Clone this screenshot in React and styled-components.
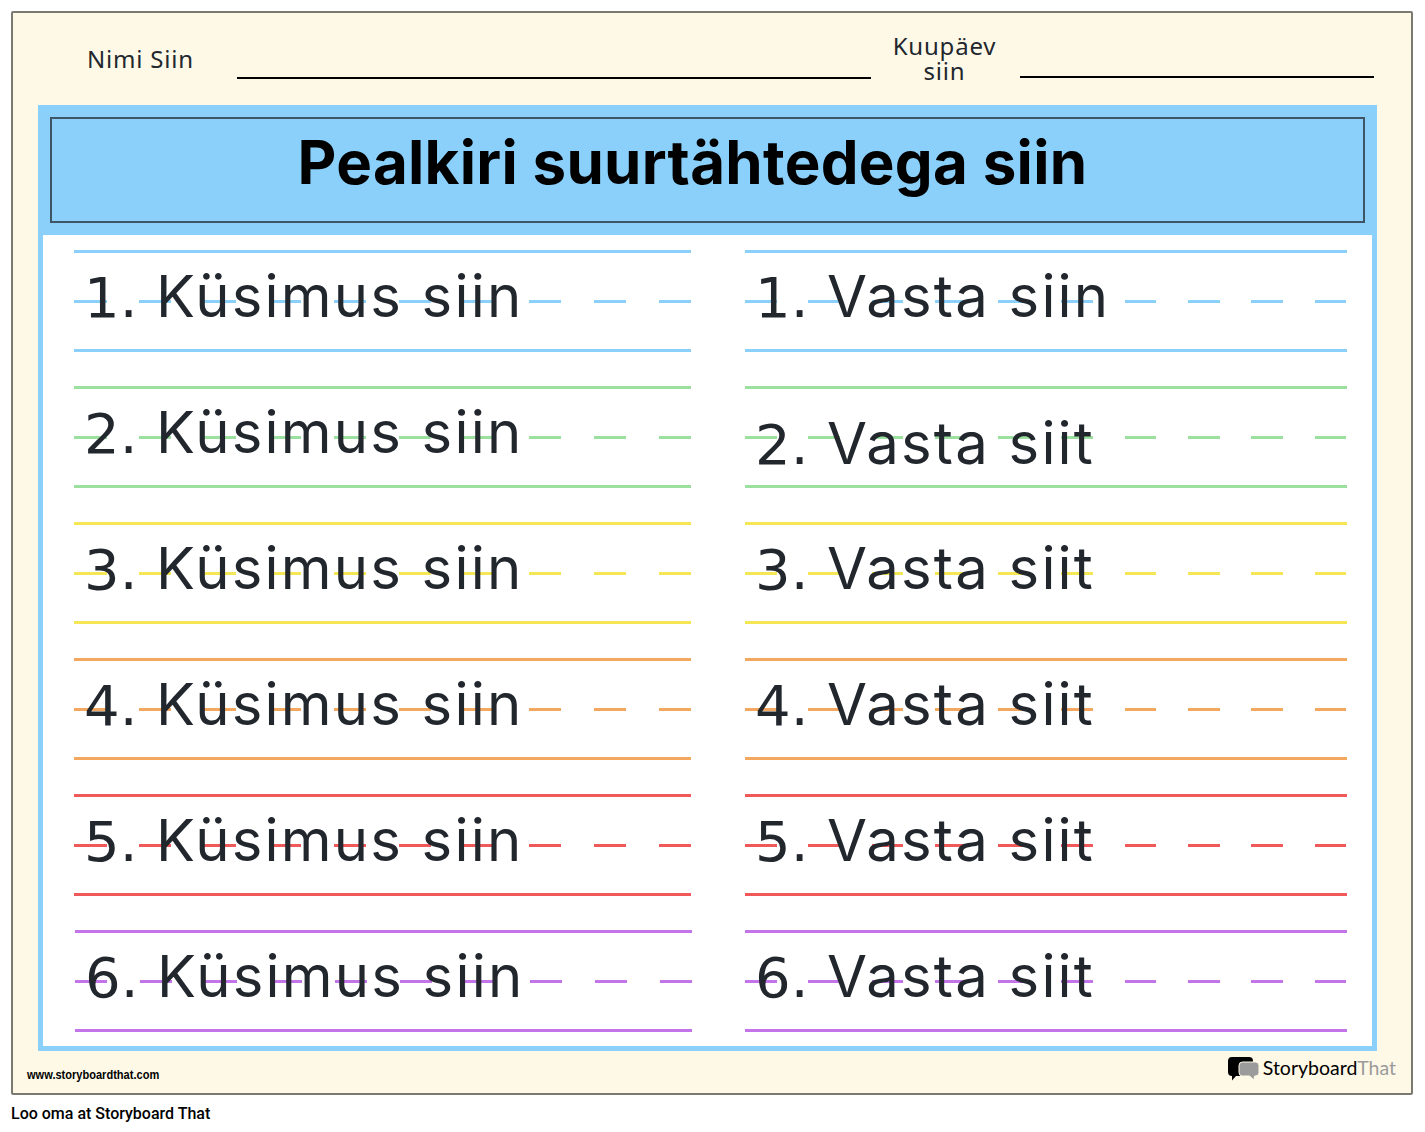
import React from 'react';
import styled, { createGlobalStyle } from 'styled-components';

const BLUE = '#8ad0fb';
const rows = [
  { color: BLUE, n: '1', q: 'Küsimus siin', a: 'Vasta siin' },
  { color: '#9be09f', n: '2', q: 'Küsimus siin', a: 'Vasta siit', low: true },
  { color: '#f5e655', n: '3', q: 'Küsimus siin', a: 'Vasta siit' },
  { color: '#f4a75e', n: '4', q: 'Küsimus siin', a: 'Vasta siit' },
  { color: '#f0595a', n: '5', q: 'Küsimus siin', a: 'Vasta siit' },
  { color: '#c374e8', n: '6', q: 'Küsimus siin', a: 'Vasta siit', shift: true },
];

function LogoMark() {
  return (
    <LogoIcon width="32" height="24" viewBox="0 0 32 24">
      <path d="M4 0h17a4 4 0 0 1 4 4v11a4 4 0 0 1-4 4H8l-4 4.500V19a4 4 0 0 1-4-4V4a4 4 0 0 1 4-4z" fill="#000" />
      <path d="M14.500 5h13a3.500 3.500 0 0 1 3.500 3.500v7a3.500 3.500 0 0 1-3.500 3.500h-1l-.5 4-4.500-4h-7A3.500 3.500 0 0 1 11 15.500v-7A3.500 3.500 0 0 1 14.500 5z" fill="#9b9b9b" stroke="#fef9e7" strokeWidth="1" />
    </LogoIcon>
  );
}

export default function App() {
  return (
    <Page>
      <GlobalStyle />
      <Sheet>
        <NameBar>
          <NameLabel>Nimi Siin</NameLabel>
          <NameLine />
          <DateLabel>
            Kuupäev
            <br />
            siin
          </DateLabel>
          <DateLine />
        </NameBar>
        <Frame>
          <TitleBand>
            <TitleBox>
              <Title>Pealkiri suurtähtedega siin</Title>
            </TitleBox>
          </TitleBand>
          <Columns>
            <Column>
              {rows.map((r) => (
                <WriteRow key={r.n} $color={r.color} $dash={65} $shift={r.shift}>
                  <RowText>
                    <Num>{r.n}.</Num> {r.q}
                  </RowText>
                </WriteRow>
              ))}
            </Column>
            <Column $right>
              {rows.map((r) => (
                <WriteRow key={r.n} $color={r.color} $dash={63.3}>
                  <RowText $low={r.low}>
                    <Num>{r.n}.</Num> {r.a}
                  </RowText>
                </WriteRow>
              ))}
            </Column>
          </Columns>
        </Frame>
        <SheetFooter>
          <SiteUrl>www.storyboardthat.com</SiteUrl>
          <Logo>
            <LogoMark />
            <LogoText>
              Storyboard<LogoGrey>That</LogoGrey>
            </LogoText>
          </Logo>
        </SheetFooter>
      </Sheet>
      <Credit>Loo oma at Storyboard That</Credit>
    </Page>
  );
}

const GlobalStyle = createGlobalStyle`
  body {
    margin: 0;
    background: #ffffff;
    font-family: "Noto Sans", sans-serif;
  }
`;

const Page = styled.div`
  width: 1425px;
  height: 1132px;
  padding: 11px 12px 0 11px;
  box-sizing: border-box;
`;

const Sheet = styled.section`
  height: 1084px;
  box-sizing: border-box;
  background: #fef9e7;
  border: 2px solid #7a7a70;
  border-radius: 2px;
  padding: 0 35px 0 25px;
`;

const NameBar = styled.div`
  display: flex;
  align-items: flex-start;
  height: 92px;
  color: #22272e;
  font-size: 24px;
  letter-spacing: 0.8px;
`;

const NameLabel = styled.div`
  width: 199px;
  padding: 30px 0 0 49px;
  box-sizing: border-box;
  line-height: 32px;
  white-space: nowrap;
`;

const NameLine = styled.div`
  width: 634px;
  height: 2px;
  margin-top: 64px;
  background: #000;
`;

const DateLabel = styled.div`
  width: 147px;
  padding-top: 20px;
  text-align: center;
  line-height: 25px;
`;

const DateLine = styled.div`
  width: 354px;
  height: 2px;
  margin: 63px 0 0 2px;
  background: #000;
`;

const Frame = styled.div`
  width: 1339px;
  height: 946px;
  box-sizing: border-box;
  border: 5px solid ${BLUE};
  background: #ffffff;
`;

const TitleBand = styled.header`
  background: ${BLUE};
  margin: -5px -5px 0;
  padding: 12px;
  height: 130px;
  box-sizing: border-box;
`;

const TitleBox = styled.div`
  height: 106px;
  box-sizing: border-box;
  border: 2px solid #3e5566;
  display: flex;
  align-items: center;
  justify-content: center;
  padding: 0 30px 16px 0;
`;

const Title = styled.h1`
  margin: 0;
  color: #000;
  font-family: Inter, sans-serif;
  font-size: 60px;
  font-weight: 700;
  line-height: 1;
  letter-spacing: 0.3px;
  white-space: nowrap;
`;

const Columns = styled.div`
  display: flex;
  padding: 15px 0 0 31px;
`;

const Column = styled.div`
  display: flex;
  flex-direction: column;
  gap: 34px;
  width: ${(p) => (p.$right ? '602px' : '617px')};
  margin-left: ${(p) => (p.$right ? '54px' : '0')};
`;

const WriteRow = styled.div`
  position: relative;
  height: 102px;
  box-sizing: border-box;
  border-top: 3px solid ${(p) => p.$color};
  border-bottom: 3px solid ${(p) => p.$color};
  display: flex;
  align-items: center;
  margin-left: ${(p) => (p.$shift ? '1px' : '0')};
  margin-right: ${(p) => (p.$shift ? '-1px' : '0')};

  &::before {
    content: '';
    position: absolute;
    left: 0;
    right: 0;
    top: 47px;
    height: 3px;
    background: repeating-linear-gradient(
      to right,
      ${(p) => p.$color} 0,
      ${(p) => p.$color} ${(p) => p.$dash / 2}px,
      transparent ${(p) => p.$dash / 2}px,
      transparent ${(p) => p.$dash}px
    );
  }
`;

const RowText = styled.div`
  position: relative;
  padding-left: 10px;
  color: #22272e;
  font-family: Inter, sans-serif;
  font-size: 58px;
  line-height: 1;
  letter-spacing: 2.2px;
  white-space: nowrap;
  top: ${(p) => (p.$low ? '6px' : '-5px')};
`;

const Num = styled.span`
  font-family: "DejaVu Sans", sans-serif;
  font-size: 56px;
  letter-spacing: 0;
`;

const SheetFooter = styled.footer`
  display: flex;
  justify-content: space-between;
  align-items: flex-start;
  margin-right: -20px;
`;

const SiteUrl = styled.div`
  margin: 15px 0 0 -11px;
  color: #000;
  font-family: "Liberation Sans", sans-serif;
  font-size: 13px;
  font-weight: 700;
  line-height: 18px;
  transform: scaleX(0.85);
  transform-origin: left center;
`;

const Logo = styled.div`
  display: flex;
  align-items: center;
  gap: 3px;
  margin-top: 4px;
`;

const LogoIcon = styled.svg`
  margin-top: 1px;
`;

const LogoText = styled.span`
  color: #000;
  font-family: Lato, sans-serif;
  font-size: 19.5px;
  line-height: 26px;
`;

const LogoGrey = styled.span`
  color: #9b9b9b;
`;

const Credit = styled.div`
  margin-top: 9px;
  color: #000;
  font-family: Roboto, sans-serif;
  font-size: 16px;
  font-weight: 500;
  line-height: 19px;
`;
